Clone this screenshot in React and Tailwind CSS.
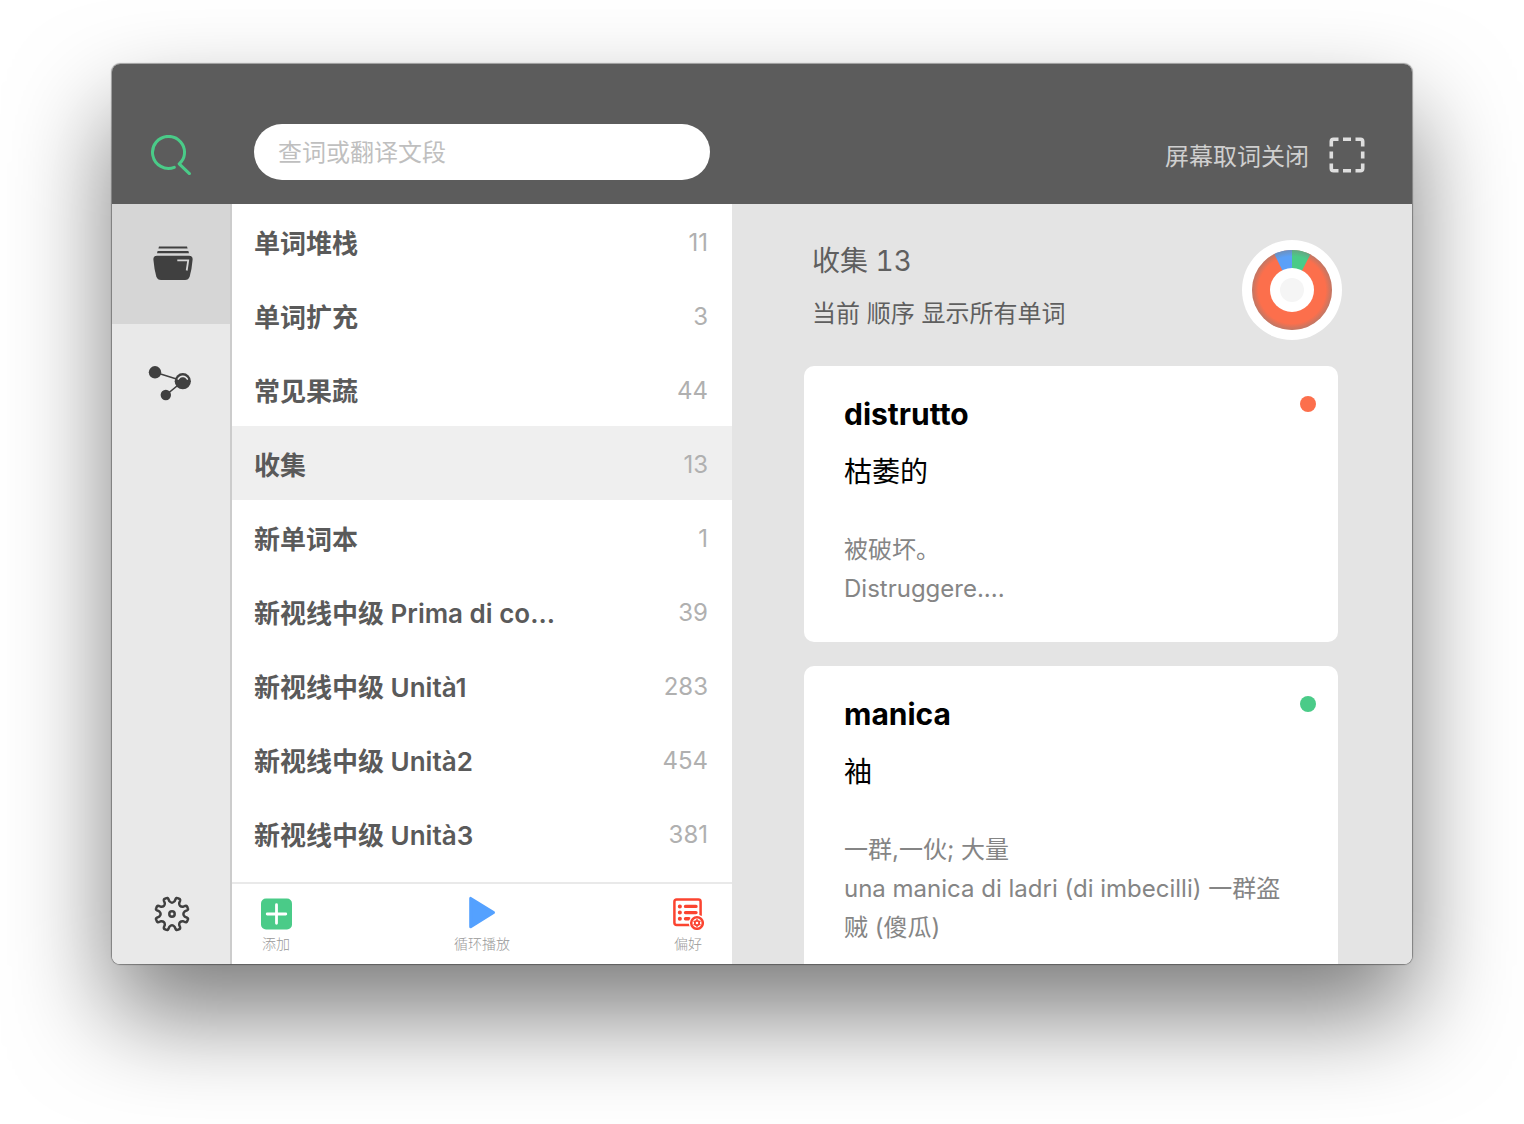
const books = [
  { name: "单词堆栈", count: 11 },
  { name: "单词扩充", count: 3 },
  { name: "常见果蔬", count: 44 },
  { name: "收集", count: 13 },
  { name: "新单词本", count: 1 },
  { name: "新视线中级 Prima di co...", count: 39 },
  { name: "新视线中级 Unità1", count: 283 },
  { name: "新视线中级 Unità2", count: 454 },
  { name: "新视线中级 Unità3", count: 381 },
];

const words = [
  { word: "distrutto", meaning: "枯萎的", notes: ["被破坏。", "Distruggere...."], dot: "bg-[#fc6f4c]" },
  {
    word: "manica",
    meaning: "袖",
    notes: ["一群,一伙; 大量", "una manica di ladri (di imbecilli) 一群盗贼 (傻瓜)"],
    dot: "bg-[#4acb88]",
  },
];

function polar(radius, degrees) {
  const a = (degrees * Math.PI) / 180;
  return `${(18 + radius * Math.cos(a)).toFixed(2)} ${(18 + radius * Math.sin(a)).toFixed(2)}`;
}

// Eight rounded teeth, each followed by a rounded valley.
const gearPath =
  Array.from({ length: 8 }, (_, i) => {
    const t = i * 45 + 22.5;
    return `${i ? "L" : "M"}${polar(13, t - 11)} L${polar(15.4, t - 9)} Q${polar(17.2, t - 7)} ${polar(16.8, t - 3)} L${polar(16.8, t + 3)} Q${polar(17.2, t + 7)} ${polar(15.4, t + 9)} L${polar(13, t + 11)} Q${polar(10, t + 22.5)} ${polar(13, t + 34)}`;
  }).join(" ") + "Z";

function SearchIcon() {
  return (
    <svg width="40" height="40" viewBox="0 0 40 40" fill="none" stroke="#4acb88" strokeWidth="3" strokeLinecap="round" strokeLinejoin="round" aria-hidden="true">
      <path d="M23.3 32.3A16 16 0 1 1 33.3 20C32.8 23.8 31 26.4 28.2 28.8L38.4 38.6" />
    </svg>
  );
}

function CaptureIcon() {
  return (
    <svg width="36" height="36" viewBox="0 0 36 36" fill="none" stroke="#dedede" strokeWidth="3.6" aria-hidden="true">
      <path d="M2.3 9.5V4.6Q2.3 2.3 4.6 2.3H9.5M26.5 2.3H31.4Q33.7 2.3 33.7 4.6V9.5M33.7 26.5V31.4Q33.7 33.7 31.4 33.7H26.5M9.5 33.7H4.6Q2.3 33.7 2.3 31.4V26.5M14 2.3H22M14 33.7H22M2.3 14.5V21.5M33.7 14.5V21.5" />
    </svg>
  );
}

function FolderIcon() {
  return (
    <svg width="40" height="36" viewBox="0 0 40 36" fill="#404040" aria-hidden="true">
      <path d="M6 1.4H34L34.6 3.6H5.4ZM4.6 5.9H35.4L36 8.3H4Z" />
      <path d="M4 10.7H36Q39.9 10.7 39.6 14.5Q38.8 24.5 36.7 31.5Q35.5 35 32 35H8Q4.5 35 3.3 31.5Q1.2 24.5 .4 14.5Q.1 10.7 4 10.7Z" />
      <path d="M24.3 15.3H35.2L33.7 25.5" fill="none" stroke="#d6d6d6" strokeWidth="1.8" />
    </svg>
  );
}

function GraphIcon() {
  return (
    <svg width="44" height="36" viewBox="0 0 44 36" fill="#404040" aria-hidden="true">
      <path d="M7 6.3L35 15L18 29" fill="none" stroke="#404040" strokeWidth="1.6" />
      <circle cx="7" cy="6.3" r="6.2" />
      <circle cx="34.8" cy="15.2" r="8.1" />
      <circle cx="17.8" cy="29" r="5.2" />
      <path d="M30.2 13.2Q31.6 10.4 34.8 10.3Q38 10.4 39.4 13.2" fill="none" stroke="#e9e9e9" strokeWidth="1.5" strokeLinecap="round" />
    </svg>
  );
}

function GearIcon() {
  return (
    <svg width="36" height="36" viewBox="0 0 36 36" fill="none" stroke="#404040" strokeWidth="2.5" strokeLinejoin="round" className="overflow-visible" aria-hidden="true">
      <path d={gearPath} />
      <circle cx="18" cy="18" r="2.7" />
    </svg>
  );
}

function AddIcon() {
  return (
    <svg width="32" height="32" viewBox="0 0 32 32" aria-hidden="true">
      <rect x="1" y=".5" width="31" height="31" rx="5" fill="#4acb88" />
      <path d="M16.5 6.7V25.3M7.2 16H25.8" stroke="#fff" strokeWidth="2.8" strokeLinecap="round" />
    </svg>
  );
}

function PlayIcon() {
  return (
    <svg width="32" height="32" viewBox="0 0 32 32" className="overflow-visible" aria-hidden="true">
      <path d="M4.7 .4V28.8L27.5 14.6Z" fill="#54a1ff" stroke="#54a1ff" strokeWidth="3" strokeLinejoin="round" />
    </svg>
  );
}

function PreferenceIcon() {
  return (
    <svg width="32" height="32" viewBox="0 0 32 32" fill="none" stroke="#fb4430" strokeWidth="2.5" strokeLinecap="round" aria-hidden="true">
      <path d="M18 27H4.6Q2.4 27 2.4 24.8V3.8Q2.4 1.6 4.6 1.6H26.4Q28.6 1.6 28.6 3.8V17" />
      <path d="M13.5 8.4H24M13.5 14.6H24M13.5 20.8H17" strokeWidth="3.4" />
      <path d="M7.8 8.4H7.9M7.8 14.6H7.9M7.8 20.8H7.9" strokeWidth="4" />
      <circle cx="25" cy="25" r="8.2" fill="#fff" stroke="none" />
      <circle cx="25" cy="25" r="5.8" fill="#fff" />
      <circle cx="25" cy="25" r="2.2" strokeWidth="1.8" />
      <path d="M25 21V22.6M25 27.4V29M21.5 23L23 23.9M27 26.1L28.5 27M21.5 27L23 26.1M27 23.9L28.5 23" strokeWidth="1.4" strokeLinecap="butt" />
    </svg>
  );
}

function ProgressDonut() {
  return (
    <svg width="100" height="100" viewBox="0 0 100 100" role="img" aria-label="收集 13">
      <defs>
        <radialGradient id="rim" cx="50" cy="50" r="40" gradientUnits="userSpaceOnUse">
          <stop offset=".84" stopColor="#808080" stopOpacity="0" />
          <stop offset="1" stopColor="#808080" stopOpacity=".5" />
        </radialGradient>
      </defs>
      <circle cx="50" cy="50" r="50" fill="#fff" />
      <circle cx="50" cy="50" r="40" fill="#fc6f4c" />
      <path d="M50 50L32.3 14.1A40 40 0 0 1 50 10Z" fill="#5ba0f8" />
      <path d="M50 50V10A40 40 0 0 1 68.3 14.4Z" fill="#4acb88" />
      <circle cx="50" cy="50" r="40" fill="url(#rim)" />
      <circle cx="50" cy="50" r="22" fill="#fff" />
      <circle cx="50" cy="50" r="12" fill="#f5f5f5" />
    </svg>
  );
}

function ToolButton({ icon, label }) {
  return (
    <button type="button" className="flex flex-col items-center gap-1">
      {icon}
      <span className="text-sm font-light text-[#999]">{label}</span>
    </button>
  );
}

function WordCard({ word, meaning, notes, dot }) {
  return (
    <article className="relative shrink-0 rounded-[10px] bg-white px-10 pt-7 pb-[34px]">
      <span className={`absolute top-[30px] right-[22px] size-4 rounded-full ${dot}`} />
      <h3 className="text-[30px] leading-10 font-bold text-black">{word}</h3>
      <p className="mt-[18px] text-[28px] leading-10 text-black">{meaning}</p>
      <div className="mt-[38px] text-2xl leading-[39px] text-[#858585]">
        {notes.map((note) => (
          <p key={note}>{note}</p>
        ))}
      </div>
    </article>
  );
}

export default function App() {
  return (
    <div lang="zh-CN" className="flex h-screen flex-col bg-white px-28 pt-16 pb-40 font-[Inter,'Noto_Sans_CJK_SC',sans-serif]">
      <div className="flex min-h-0 flex-1 flex-col overflow-hidden rounded-lg shadow-[0_0_1px_1px_rgba(0,0,0,0.35),0_50px_100px_rgba(0,0,0,0.52)]">
        <header className="flex shrink-0 items-center bg-[#5c5c5c] pt-15 pr-[47px] pb-6">
          <label htmlFor="search" aria-label="查词或翻译文段" className="flex h-14 w-[118px] items-center justify-center pt-1.5">
            <SearchIcon />
          </label>
          <input
            id="search"
            type="text"
            placeholder="查词或翻译文段"
            className="ml-6 h-14 w-[456px] rounded-full bg-white px-6 text-2xl text-[#5c5c5c] outline-none placeholder:text-[#bfbfbf]"
          />
          <button type="button" className="ml-auto flex h-14 items-center gap-5 pt-1.5 text-2xl text-[#cfcfcf]">
            <span className="pt-1">屏幕取词关闭</span>
            <CaptureIcon />
          </button>
        </header>

        <div className="flex min-h-0 flex-1">
          <nav className="flex w-[120px] shrink-0 flex-col border-r-2 border-[#ccc] bg-[#e9e9e9]">
            <button type="button" aria-label="单词本" className="flex h-[120px] items-center justify-center bg-[#d6d6d6] pb-0.5 pl-1">
              <FolderIcon />
            </button>
            <button type="button" aria-label="关系图" className="flex h-[120px] items-center justify-center pr-0.5">
              <GraphIcon />
            </button>
            <button type="button" aria-label="设置" className="mt-auto flex h-[100px] items-center justify-center pl-0.5">
              <GearIcon />
            </button>
          </nav>

          <section className="flex w-[500px] shrink-0 flex-col bg-white">
            <ul className="min-h-0 flex-1 overflow-hidden">
              {books.map((book) => (
                <li key={book.name}>
                  <button
                    type="button"
                    className={`flex h-[74px] w-full items-center justify-between pt-1 pr-6 pl-[22px] ${book.name === "收集" ? "bg-[#efefef]" : ""}`}
                  >
                    <span className="text-[26px] font-semibold text-[#5a5a5a]">{book.name}</span>
                    <span className="text-2xl text-[#b0b0b0]">{book.count}</span>
                  </button>
                </li>
              ))}
            </ul>
            <div className="flex h-[82px] shrink-0 items-start justify-between border-t-2 border-[#e9e9e9] px-7 pt-3.5">
              <ToolButton icon={<AddIcon />} label="添加" />
              <ToolButton icon={<PlayIcon />} label="循环播放" />
              <ToolButton icon={<PreferenceIcon />} label="偏好" />
            </div>
          </section>

          <main className="flex min-w-0 flex-1 flex-col overflow-hidden bg-[#e4e4e4] pt-9 pr-[74px] pl-[72px]">
            <div className="-mr-1 flex shrink-0 justify-between pl-2 text-[#5f5f5f]">
              <div>
                <h2 className="text-[28px] leading-[42px] tabular-nums">收集 13</h2>
                <p className="mt-3 text-2xl leading-10">当前 顺序 显示所有单词</p>
              </div>
              <ProgressDonut />
            </div>
            <div className="mt-[26px] flex flex-col gap-6">
              {words.map((item) => (
                <WordCard key={item.word} {...item} />
              ))}
            </div>
          </main>
        </div>
      </div>
    </div>
  );
}
